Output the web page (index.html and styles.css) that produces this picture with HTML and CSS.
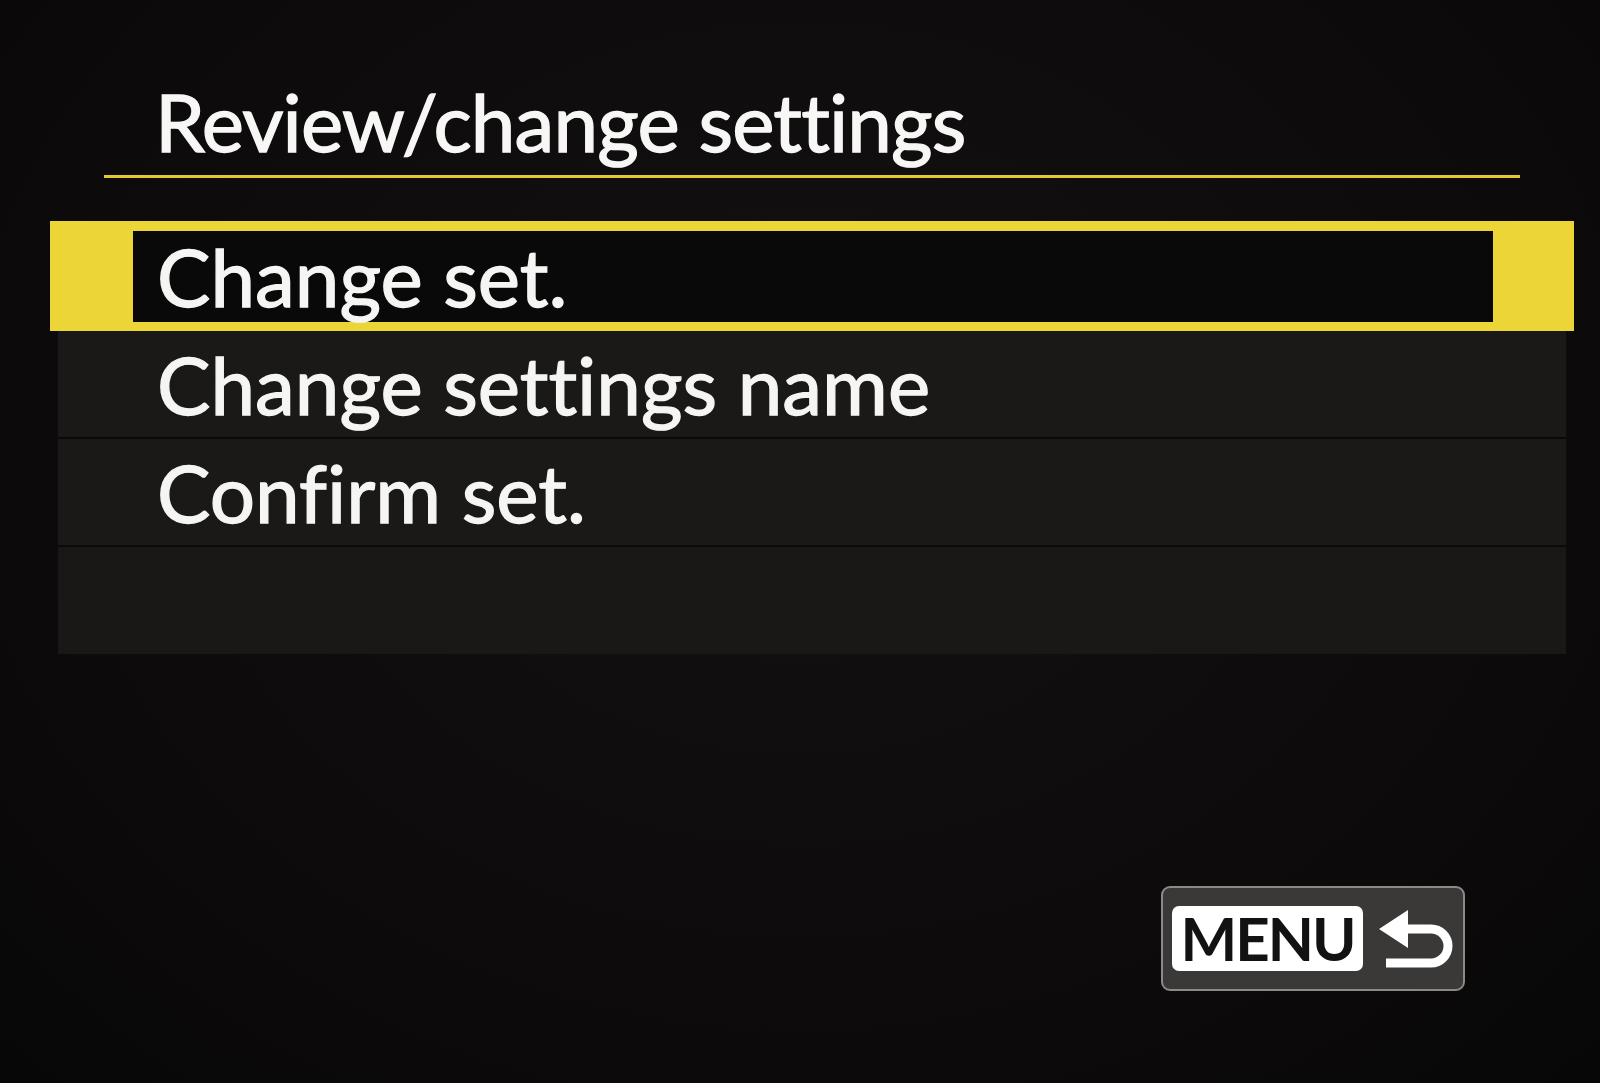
FILE: index.html
```html
<!DOCTYPE html>
<html lang="en">
<head>
<meta charset="utf-8">
<title>Review/change settings</title>
<link rel="stylesheet" href="styles.css">
</head>
<body>
<div class="screen">
  <h1 class="title">Review/change settings</h1>
  <div class="rule"></div>
  <ul class="menu">
    <li class="item selected"><span class="label">Change set.</span></li>
    <li class="item"><span class="label">Change settings name</span></li>
    <li class="item"><span class="label">Confirm set.</span></li>
    <li class="item empty"></li>
  </ul>
  <div class="footer">
    <div class="menu-btn">
      <span class="menu-key">MENU</span>
      <svg class="back-icon" width="82" height="70" viewBox="0 0 82 70">
        <polygon points="3,25 32,6 32,44" fill="#ffffff"/>
        <path d="M28 25 H55 A17 17 0 0 1 55 59 H10" fill="none" stroke="#ffffff" stroke-width="9"/>
      </svg>
    </div>
  </div>
</div>
</body>
</html>
```
FILE: styles.css
```css
html, body {
  margin: 0;
  padding: 0;
  background: #0e0c0b;
}
body {
  width: 1600px;
  height: 1083px;
  overflow: hidden;
  font-family: "Lato", "DejaVu Sans", sans-serif;
  font-variant-ligatures: none;
  font-feature-settings: "liga" 0, "clig" 0, "dlig" 0;
  color: #f5f5f3;
}
.screen {
  width: 1600px;
  height: 1083px;
  background: radial-gradient(ellipse at 50% 40%, #131111 0%, #0c0a0a 70%, #080707 100%);
  display: flex;
  flex-direction: column;
}
.title {
  margin: 0;
  padding: 81px 0 0 155px;
  font-size: 80px;
  line-height: 80px;
  font-weight: 400;
  letter-spacing: -0.85px;
  color: #f7f7f5;
  -webkit-text-stroke: 1.3px #f7f7f5;
}
.rule {
  margin: 14px 0 0 104px;
  width: 1416px;
  height: 3px;
  background: #e2c92e;
}
.menu {
  list-style: none;
  margin: 43px 0 0 50px;
  padding: 0;
  width: 1524px;
}
.item {
  box-sizing: border-box;
  margin: 0 8px;
  height: 108px;
  background: #1b1918;
  border-bottom: 2px solid #0b0a0a;
  display: flex;
  align-items: center;
  padding-left: 99px;
  font-size: 80px;
  line-height: 106px;
  letter-spacing: 0;
  -webkit-text-stroke: 1.3px #f5f5f3;
}
.item.empty {
  height: 107px;
  border-bottom: none;
  background: #1a1817;
}
.item.selected {
  margin: 0;
  height: 110px;
  border-style: solid;
  border-color: #ecd536;
  border-width: 10px 81px 9px 83px;
  background: #0a0909;
  padding-left: 24px;
  line-height: 91px;
}
.footer {
  display: flex;
  justify-content: flex-end;
  padding-right: 135px;
  margin-top: 232px;
}
.menu-btn {
  box-sizing: border-box;
  width: 304px;
  height: 105px;
  border: 2px solid #8c8a87;
  border-radius: 9px;
  background: #3b3938;
  display: flex;
  align-items: center;
  padding-left: 9px;
  gap: 13px;
}
.menu-key {
  box-sizing: border-box;
  width: 191px;
  height: 65px;
  background: #ffffff;
  border-radius: 7px;
  color: #121212;
  font-weight: 700;
  font-size: 60px;
  line-height: 65px;
  letter-spacing: -2px;
  text-align: center;
}
.back-icon {
  display: block;
}
```
